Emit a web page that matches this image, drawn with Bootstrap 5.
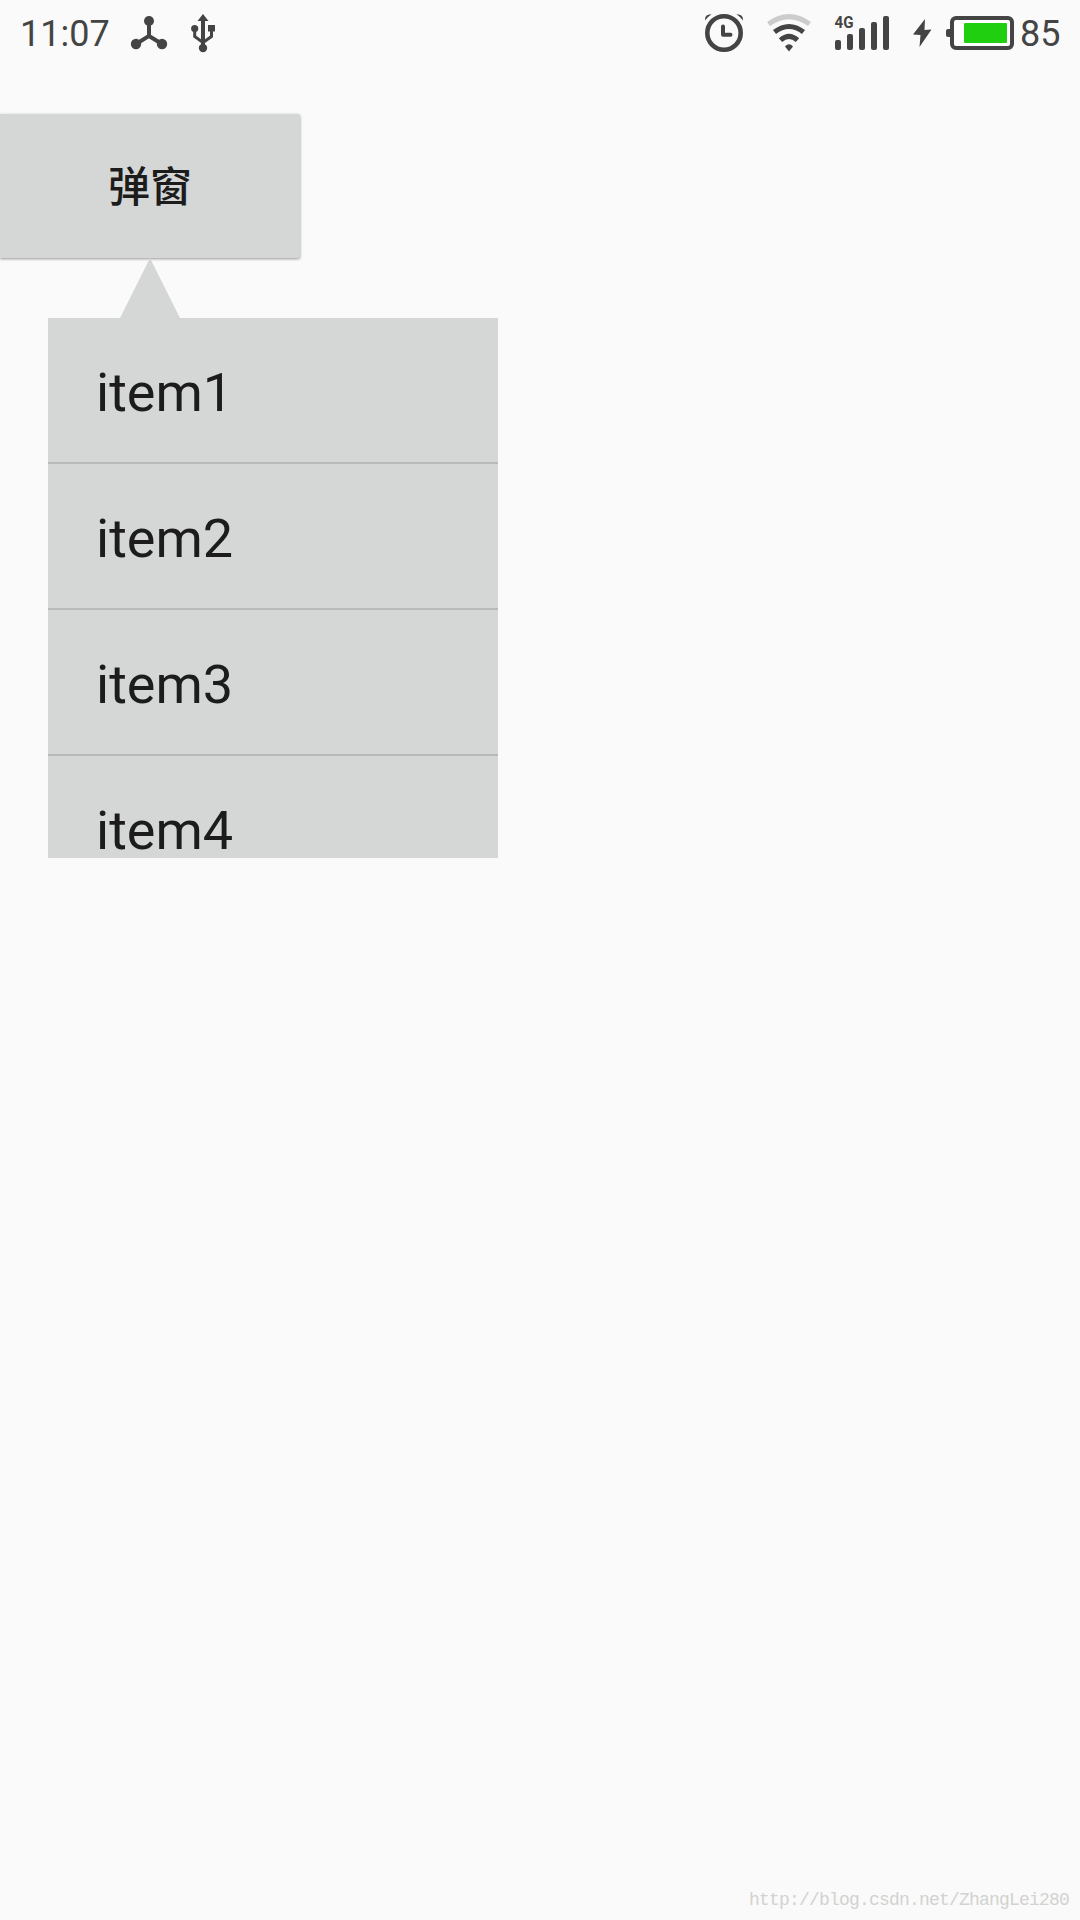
<!DOCTYPE html>
<html lang="zh">
<head>
<meta charset="utf-8">
<meta name="viewport" content="width=device-width, initial-scale=1">
<title>弹窗</title>
<link href="https://cdn.jsdelivr.net/npm/bootstrap@5.3.0/dist/css/bootstrap.min.css" rel="stylesheet">
<style>
  body { background: #fafafa; color: #1b1c1b; font-family: Roboto, "Noto Sans CJK SC", sans-serif; }
  .screen { height: 1920px; }
  .status-bar { height: 114px; padding: 0 19.5px 0 20px; color: #444; font-size: 36px; line-height: 69px; }
  .status-bar svg { display: block; height: 66px; flex: none; }
  .status-left svg { margin-left: 15.5px; }
  .ink { fill: #444; }
  .stroke-ink { fill: none; stroke: #444; }
  .net-label { font: 700 17px Roboto, sans-serif; }
  .popup-btn { width: 300px; height: 144px; border: 0; border-radius: 0 2px 2px 0; background: #d5d7d6; color: #1b1c1b;
    font: 500 42px/1 "Noto Sans CJK SC", sans-serif; box-shadow: 0 1px 3px rgba(0,0,0,.4); padding: 0 0 4px 0; }
  .popup-btn:hover { background: #d5d7d6; color: #1b1c1b; }
  .arrow-tip { width: 60px; height: 60px; margin-left: 120px; background: #d5d7d6; clip-path: polygon(50% 0, 100% 100%, 0 100%); z-index: 1; }
  .popup-list { width: 450px; height: 540px; margin-left: 48px; background: #d5d7d6; }
  .popup-list .list-group-item { height: 146px; flex: none; padding: 5px 48px 0; border: 0; border-bottom: 2px solid #b8baba;
    background: transparent; color: #1b1c1b; font-size: 54px; line-height: 140px; }
  .watermark { font: 18px/20px "Liberation Mono", monospace; letter-spacing: -.802px; color: #d2d2d0; padding: 0 11px 10px 0; }
</style>
</head>
<body>
<main class="screen d-flex flex-column overflow-hidden">
  <header class="status-bar d-flex align-items-start justify-content-between">
    <div class="status-left d-flex">
      <span>11:07</span>
      <svg width="95" viewBox="125 0 95 66">
        <path class="stroke-ink" stroke-width="4" d="M149 21V36L136 44M149 36L162 44"/>
        <g class="ink"><circle cx="149" cy="21" r="5"/><circle cx="136" cy="44" r="5.2"/><circle cx="162" cy="44" r="5.2"/></g>
        <path class="stroke-ink" stroke-width="4" d="M203 20V48"/>
        <path class="stroke-ink" stroke-width="3" d="M194.700 30V36.500L203 42.500M211.500 30V36.500L203 42.500"/>
        <g class="ink"><path d="M203 14L208.500 21H197.500Z"/><circle cx="203" cy="48" r="4.200"/><circle cx="194.700" cy="28.500" r="3.600"/><path d="M208 25h7v6.500h-7z"/></g>
      </svg>
    </div>
    <div class="d-flex">
      <svg width="320" viewBox="700 0 320 66">
        <circle class="stroke-ink" stroke-width="4.600" cx="724" cy="33" r="16.700"/>
        <path class="stroke-ink" stroke-width="4" stroke-linecap="round" stroke-linejoin="round" d="M723 26.500V34.700H730.500"/>
        <path class="ink" d="M705 20.500Q704.500 14 711.500 14.200Q708 16.500 705 20.500ZM743 20.500Q743.500 14 736.500 14.200Q740 16.500 743 20.500Z"/>
        <path fill="none" stroke="#ccc" stroke-width="5" d="M768.500 24Q789 9.300 809.500 24"/>
        <path class="stroke-ink" stroke-width="5" d="M774.500 32Q789 21 803.500 32M780.500 40.200Q789 32.500 797.500 40.200"/>
        <path class="ink" d="M785 46.500Q789 42 793 46.500L789 51.500Z"/>
        <text class="ink net-label" x="834.500" y="28" textLength="19" lengthAdjust="spacingAndGlyphs">4G</text>
        <g class="ink"><rect x="835" y="40" width="6" height="10" rx="2"/><rect x="847" y="34" width="6" height="16" rx="2"/><rect x="859" y="28" width="6" height="22" rx="2"/><rect x="871" y="22" width="6" height="28" rx="2"/><rect x="883" y="16" width="6" height="34" rx="2"/></g>
        <path class="ink" d="M925 19L913 34.500L920.500 35L919.500 47L931.500 29.500L924.500 30Z"/>
        <rect x="952" y="18" width="60" height="30" rx="4" fill="#fff" stroke="#444" stroke-width="4"/>
        <path class="ink" d="M951 29H948Q946 29 946 31V35Q946 37 948 37H951Z"/>
        <rect x="964" y="23" width="43" height="20" rx="1" fill="#20d010"/>
      </svg>
      <span>85</span>
    </div>
  </header>
  <button class="btn popup-btn flex-shrink-0" type="button">弹窗</button>
  <div class="arrow-tip flex-shrink-0"></div>
  <div class="popup-list list-group rounded-0 overflow-hidden flex-shrink-0">
    <div class="list-group-item">item1</div>
    <div class="list-group-item">item2</div>
    <div class="list-group-item">item3</div>
    <div class="list-group-item">item4</div>
  </div>
  <footer class="watermark mt-auto text-end">http://blog.csdn.net/ZhangLei280</footer>
</main>
<script src="https://cdn.jsdelivr.net/npm/bootstrap@5.3.0/dist/js/bootstrap.bundle.min.js"></script>
</body>
</html>
